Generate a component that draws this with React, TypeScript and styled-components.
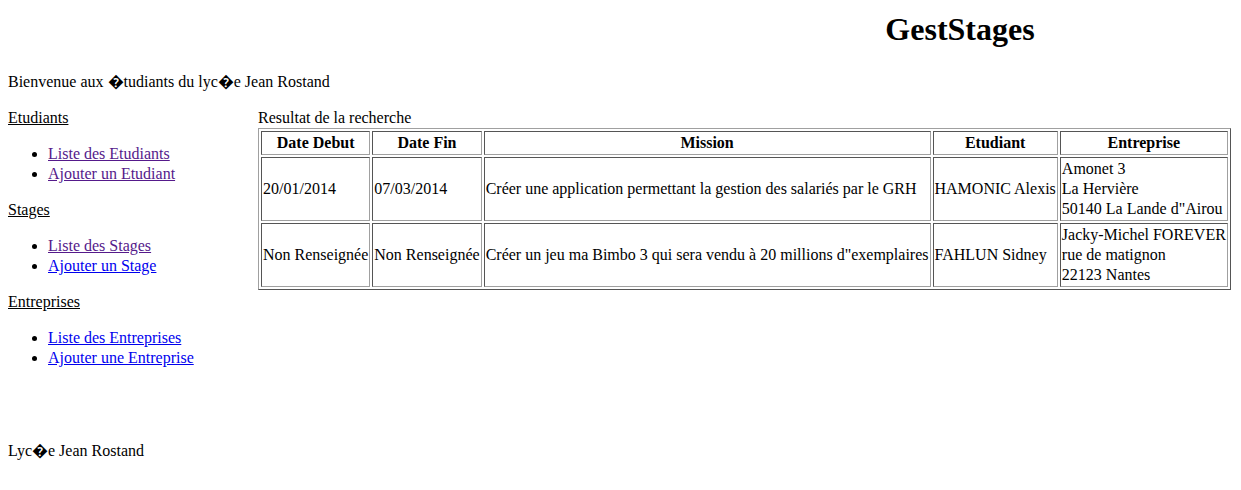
import React from "react";
import styled, { createGlobalStyle } from "styled-components";

const GlobalStyle = createGlobalStyle`
  html, body { background: #fff; }
  body {
    margin: 8px;
    font-family: "Liberation Serif", "Times New Roman", serif;
    font-size: 16px;
    line-height: 20px;
    color: #000;
  }
`;

const Header = styled.header`
  padding-left: 679px;
  text-align: center;
`;

const Title = styled.h1`
  margin: 1px 0 23px;
  font-size: 32px;
  line-height: 40px;
  font-weight: bold;
`;

const Welcome = styled.p`
  margin: 0 0 16px;
`;

const Main = styled.div`
  display: flex;
  align-items: flex-start;
`;

const Nav = styled.nav`
  width: 250px;
  flex: none;
`;

const NavHeading = styled.div`
  text-decoration: underline;
`;

const NavList = styled.ul`
  margin: 16px 0;
  padding-left: 40px;
  list-style: disc;
`;

const NavLink = styled.a<{ $visited?: boolean }>`
  color: ${(p) => (p.$visited ? "#551a8b" : "#0000ee")};
  text-decoration: underline;
`;

const Content = styled.section`
  flex: 1;
`;

const Caption = styled.div``;

const Table = styled.table`
  border-collapse: separate;
  border-spacing: 2px;
  border: 1px solid;
  border-color: #a0a0a0 #555 #555 #a0a0a0;
`;

const Th = styled.th`
  padding: 1px;
  border: 1px solid;
  border-color: #555 #a0a0a0 #a0a0a0 #555;
  font-weight: bold;
  text-align: center;
  vertical-align: middle;
  white-space: nowrap;
`;

const Td = styled.td`
  padding: 1px;
  border: 1px solid;
  border-color: #555 #a0a0a0 #a0a0a0 #555;
  text-align: left;
  vertical-align: middle;
  white-space: nowrap;
`;

const Footer = styled.footer`
  margin-top: 57px;
`;

const sections = [
  {
    title: "Etudiants",
    links: [
      { label: "Liste des Etudiants", visited: true },
      { label: "Ajouter un Etudiant", visited: true },
    ],
  },
  {
    title: "Stages",
    links: [
      { label: "Liste des Stages", visited: true },
      { label: "Ajouter un Stage", visited: false },
    ],
  },
  {
    title: "Entreprises",
    links: [
      { label: "Liste des Entreprises", visited: false },
      { label: "Ajouter une Entreprise", visited: false },
    ],
  },
];

const rows = [
  {
    debut: "20/01/2014",
    fin: "07/03/2014",
    mission: "Créer une application permettant la gestion des salariés par le GRH",
    etudiant: "HAMONIC Alexis",
    entreprise: ["Amonet 3", "La Hervière", "50140 La Lande d\"Airou"],
  },
  {
    debut: "Non Renseignée",
    fin: "Non Renseignée",
    mission: "Créer un jeu ma Bimbo 3 qui sera vendu à 20 millions d\"exemplaires",
    etudiant: "FAHLUN Sidney",
    entreprise: ["Jacky-Michel FOREVER", "rue de matignon", "22123 Nantes"],
  },
];

export default function App() {
  return (
    <>
      <GlobalStyle />
      <Header>
        <Title>GestStages</Title>
      </Header>
      <Welcome>Bienvenue aux {"\uFFFD"}tudiants du lyc{"\uFFFD"}e Jean Rostand</Welcome>
      <Main>
        <Nav>
          {sections.map((s) => (
            <div key={s.title}>
              <NavHeading>{s.title}</NavHeading>
              <NavList>
                {s.links.map((l) => (
                  <li key={l.label}>
                    <NavLink href="#" $visited={l.visited}>
                      {l.label}
                    </NavLink>
                  </li>
                ))}
              </NavList>
            </div>
          ))}
        </Nav>
        <Content>
          <Caption>Resultat de la recherche</Caption>
          <Table>
            <thead>
              <tr>
                <Th>Date Debut</Th>
                <Th>Date Fin</Th>
                <Th>Mission</Th>
                <Th>Etudiant</Th>
                <Th>Entreprise</Th>
              </tr>
            </thead>
            <tbody>
              {rows.map((r, i) => (
                <tr key={i}>
                  <Td>{r.debut}</Td>
                  <Td>{r.fin}</Td>
                  <Td>{r.mission}</Td>
                  <Td>{r.etudiant}</Td>
                  <Td>
                    {r.entreprise.map((line, j) => (
                      <React.Fragment key={j}>
                        {j > 0 && <br />}
                        {line}
                      </React.Fragment>
                    ))}
                  </Td>
                </tr>
              ))}
            </tbody>
          </Table>
        </Content>
      </Main>
      <Footer>Lyc{"\uFFFD"}e Jean Rostand</Footer>
    </>
  );
}
